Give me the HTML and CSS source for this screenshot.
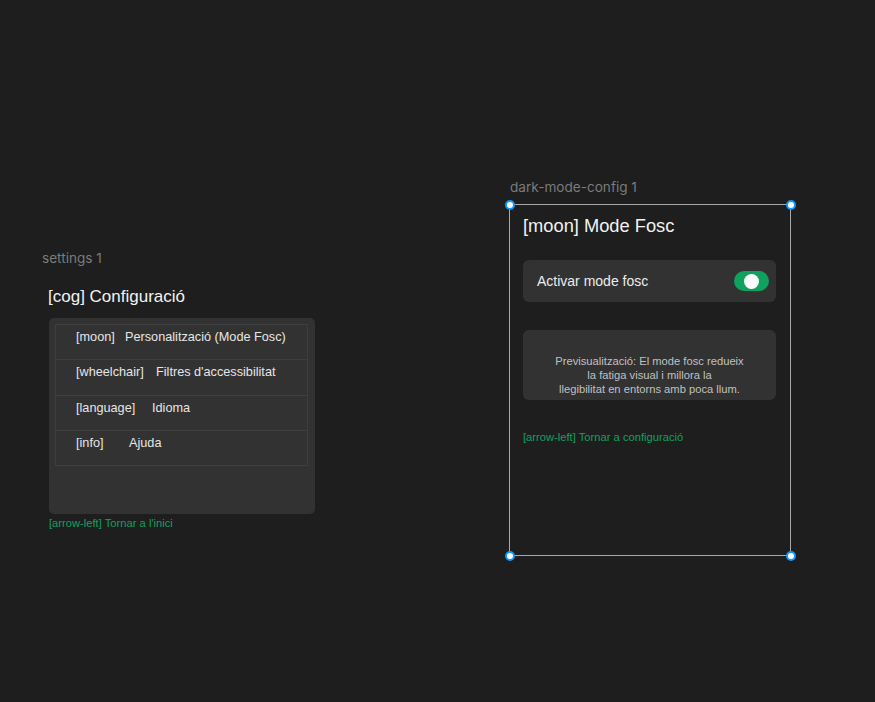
FILE: index.html
```html
<!DOCTYPE html>
<html lang="ca">
<head>
<meta charset="utf-8">
<title>Canvas</title>
<link rel="stylesheet" href="styles.css">
</head>
<body>
<div class="canvas">
  <section class="frame settings">
    <div class="frame-label">settings 1</div>
    <h1 class="title">[cog] Configuració</h1>
    <div class="card">
      <ul class="list">
        <li class="row"><span class="ico ico-moon">[moon]</span><span>Personalització (Mode Fosc)</span></li>
        <li class="row"><span class="ico ico-wheel">[wheelchair]</span><span>Filtres d'accessibilitat</span></li>
        <li class="row"><span class="ico ico-lang">[language]</span><span>Idioma</span></li>
        <li class="row"><span class="ico ico-info">[info]</span><span>Ajuda</span></li>
      </ul>
    </div>
    <a class="link" href="#">[arrow-left] Tornar a l'inici</a>
  </section>

  <section class="frame dark">
    <div class="frame-label">dark-mode-config 1</div>
    <h1 class="title title-lg">[moon] Mode Fosc</h1>
    <div class="toggle-card">
      <span>Activar mode fosc</span>
      <span class="toggle"><span class="knob"></span></span>
    </div>
    <div class="preview">Previsualització: El mode fosc redueix<br>la fatiga visual i millora la<br>llegibilitat en entorns amb poca llum.</div>
    <a class="link link-dark" href="#">[arrow-left] Tornar a configuració</a>
    <span class="handle h-tl"></span>
    <span class="handle h-tr"></span>
    <span class="handle h-bl"></span>
    <span class="handle h-br"></span>
  </section>
</div>
</body>
</html>
```

FILE: styles.css
```css
* { box-sizing: border-box; }
html, body {
  margin: 0;
  padding: 0;
  background: #1e1e1e;
  font-family: "Liberation Sans", Arial, sans-serif;
  color: #f0f0f0;
}
.canvas {
  position: relative;
  width: 875px;
  height: 702px;
  overflow: hidden;
  background: #1e1e1e;
}
.frame {
  position: absolute;
  display: flex;
  flex-direction: column;
  align-items: flex-start;
}
.frame-label {
  position: absolute;
  left: 1px;
  top: -26px;
  font-family: Inter, "Liberation Sans", sans-serif;
  font-size: 13.6px;
  line-height: 16px;
  color: #7b7b7b;
  white-space: nowrap;
}
.settings {
  left: 41px;
  top: 276px;
  width: 282px;
  padding: 11px 7px 0 7px;
}
.title {
  margin: 0;
  font-weight: normal;
  font-size: 17px;
  color: #f2f2f2;
}
.card {
  margin-top: 11px;
  margin-left: 1px;
  width: 266px;
  height: 196px;
  padding: 6px 7px 0 6px;
  background: #323232;
  border-radius: 5px;
}
.list {
  list-style: none;
  margin: 0;
  padding: 0;
  border: 1px solid #3e3e3e;
  border-bottom: none;
}
.row {
  height: 35.25px;
  padding: 5px 0 0 20px;
  border-bottom: 1px solid #3e3e3e;
  font-size: 12.7px;
  line-height: 15px;
  color: #e6e6e6;
  display: flex;
}
.ico { display: inline-block; flex: none; }
.ico-moon { width: 49px; }
.ico-wheel { width: 80px; }
.ico-lang { width: 76px; }
.ico-info { width: 53px; }
.link {
  display: block;
  font-size: 11.2px;
  color: #12a05d;
  text-decoration: none;
  white-space: nowrap;
}
.settings .link { margin-top: 3px; margin-left: 1px; }

.dark {
  left: 509px;
  top: 204px;
  width: 282px;
  height: 352px;
  border: 1px solid #a8a8a8;
  padding: 10px 14px 0 13px;
}
.dark .frame-label { left: 0; top: -26px; }
.title-lg { font-size: 18.3px; }
.toggle-card {
  margin-top: 23px;
  width: 253px;
  height: 42px;
  padding: 0 7px 0 14px;
  background: #323232;
  border-radius: 6px;
  display: flex;
  align-items: center;
  justify-content: space-between;
  font-size: 14px;
  color: #ececec;
}
.toggle {
  width: 35px;
  height: 20px;
  border-radius: 10px;
  background: #0fa15e;
  display: flex;
  align-items: center;
  padding-left: 10px;
}
.knob {
  width: 15px;
  height: 15px;
  border-radius: 50%;
  background: #ffffff;
}
.preview {
  margin-top: 28px;
  width: 253px;
  height: 70px;
  padding: 24px 6px 0 6px;
  background: #323232;
  border-radius: 6px;
  text-align: center;
  font-size: 11.2px;
  line-height: 14px;
  color: #c0c0c0;
}
.link-dark { margin-top: 31px; }
.handle {
  position: absolute;
  width: 10px;
  height: 10px;
  border-radius: 50%;
  background: #ffffff;
  border: 2px solid #0d99ff;
}
.h-tl { left: -5.5px; top: -5.5px; }
.h-tr { right: -5.5px; top: -5.5px; }
.h-bl { left: -5.5px; bottom: -5.5px; }
.h-br { right: -5.5px; bottom: -5.5px; }
```
